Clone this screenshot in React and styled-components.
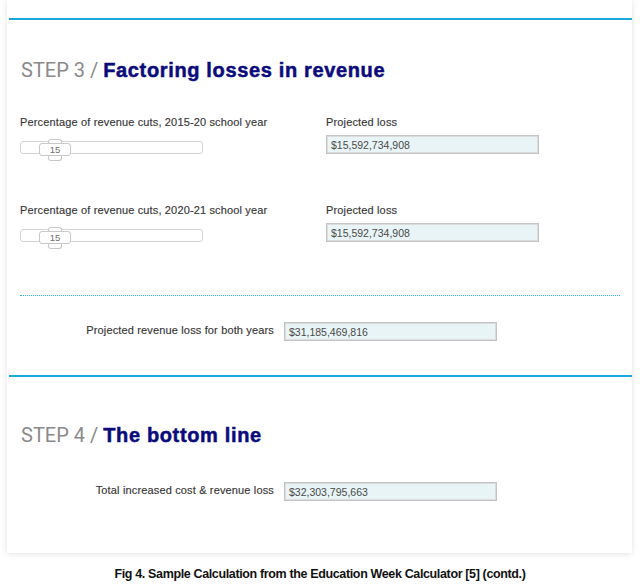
import React from "react";
import styled, { createGlobalStyle } from "styled-components";

const GlobalStyle = createGlobalStyle`
  body {
    margin: 0;
    background: #ffffff;
    font-family: "Liberation Sans", Arial, sans-serif;
  }
`;

const Card = styled.div`
  margin-left: 7px;
  width: 625px;
  padding: 18px 0 52px;
  background: #ffffff;
  box-shadow: 0 1px 6px rgba(0, 0, 0, 0.12);
`;

const Section = styled.section`
  margin-left: 2px;
  padding-left: 11px;
  border-top: 2px solid #1aa8dc;
  & + & {
    margin-top: 34px;
  }
`;

const Heading = styled.h2`
  margin: ${(p) => p.$top}px 0 0 1px;
  height: 24px;
  line-height: 24px;
  font-size: 20px;
  font-weight: 400;
  white-space: nowrap;
  span {
    font-family: Roboto, "Liberation Sans", sans-serif;
    font-size: 20px;
    color: #8a8a8a;
  }
  b {
    font-family: "Liberation Sans", Arial, sans-serif;
    font-weight: 700;
    color: #0b0b7c;
    letter-spacing: 0.65px;
    -webkit-text-stroke: 0.5px #0b0b7c;
  }
`;

const Group = styled.div`
  display: grid;
  grid-template-columns: 306px 213px;
  margin-top: ${(p) => p.$top}px;
`;

const Field = styled.div`
  display: flex;
  flex-direction: column;
`;

const Label = styled.label`
  font-size: 11px;
  line-height: 13px;
  letter-spacing: 0.15px;
  color: #363636;
  -webkit-text-stroke: 0.15px #363636;
  white-space: nowrap;
`;

const Output = styled.div`
  box-sizing: border-box;
  width: 213px;
  height: 19px;
  margin-top: ${(p) => p.$top || 0}px;
  padding: 0 4px;
  display: flex;
  align-items: center;
  background: #e8f4f5;
  border: 1px solid #c4c4c4;
  box-shadow: inset 0 0 0 1px #dcdcdc;
  font-size: 10.5px;
  color: #4a4a4a;
`;

const Track = styled.div`
  position: relative;
  box-sizing: border-box;
  width: 183px;
  height: 13px;
  margin-top: 12px;
  border: 1px solid #d2d2d2;
  border-radius: 3px;
  background: #ffffff;
`;

const Thumb = styled.div`
  position: absolute;
  left: 18px;
  top: 1px;
  box-sizing: border-box;
  width: 32px;
  height: 13px;
  border: 1px solid #c8c8c8;
  border-radius: 3px;
  background: #ffffff;
  font-size: 9.5px;
  line-height: 11px;
  text-align: center;
  color: #707070;
  &::before,
  &::after {
    content: "";
    position: absolute;
    left: 8px;
    width: 14px;
    height: 4px;
    box-sizing: border-box;
    border: 1px solid #c8c8c8;
    background: #ffffff;
  }
  &::before {
    top: -5px;
    border-bottom: none;
    border-radius: 3px 3px 0 0;
  }
  &::after {
    bottom: -6px;
    height: 5px;
    border-top: none;
    border-radius: 0 0 3px 3px;
  }
`;

const Divider = styled.div`
  margin: 53px 12px 0 0;
  border-top: 1px dotted #2fb4e8;
`;

const Row = styled.div`
  display: grid;
  grid-template-columns: 254px 213px;
  column-gap: 10px;
  align-items: center;
  margin-top: ${(p) => p.$top}px;
  ${Label} {
    text-align: right;
    margin-top: -2px;
  }
`;

const Caption = styled.p`
  margin: 13px 0 0;
  text-align: center;
  font-family: "Liberation Sans", Arial, sans-serif;
  font-weight: 700;
  font-size: 12.5px;
  letter-spacing: -0.36px;
  line-height: 16px;
  color: #111111;
`;

const Slider = ({ value }) => (
  <Track>
    <Thumb>{value}</Thumb>
  </Track>
);

const CutGroup = ({ year, loss, top }) => (
  <Group $top={top}>
    <Field>
      <Label>Percentage of revenue cuts, {year} school year</Label>
      <Slider value={15} />
    </Field>
    <Field>
      <Label>Projected loss</Label>
      <Output $top={6}>{loss}</Output>
    </Field>
  </Group>
);

const App = () => (
  <>
    <GlobalStyle />
    <Card>
      <Section>
        <Heading $top={38}>
          <span>STEP 3 / </span>
          <b>Factoring losses in revenue</b>
        </Heading>
        <CutGroup top={34} year="2015-20" loss="$15,592,734,908" />
        <CutGroup top={50} year="2020-21" loss="$15,592,734,908" />
        <Divider />
        <Row $top={26}>
          <Label>Projected revenue loss for both years</Label>
          <Output>$31,185,469,816</Output>
        </Row>
      </Section>
      <Section>
        <Heading $top={46}>
          <span>STEP 4 / </span>
          <b>The bottom line</b>
        </Heading>
        <Row $top={35}>
          <Label>Total increased cost &amp; revenue loss</Label>
          <Output>$32,303,795,663</Output>
        </Row>
      </Section>
    </Card>
    <Caption>Fig 4. Sample Calculation from the Education Week Calculator [5] (contd.)</Caption>
  </>
);

export default App;
